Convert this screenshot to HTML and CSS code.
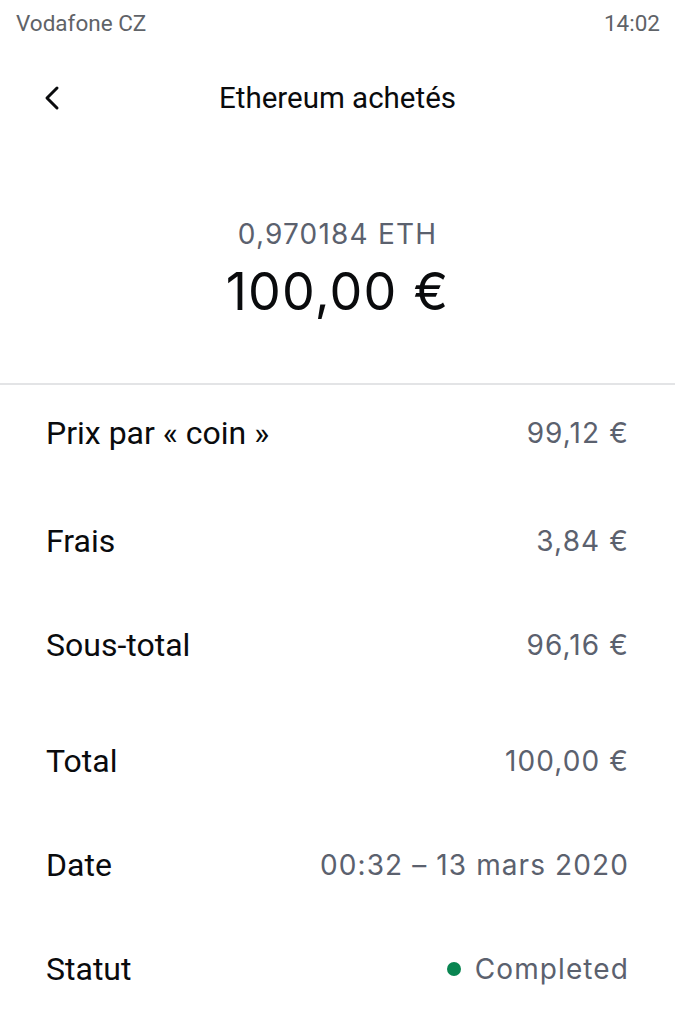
FILE: index.html
```html
<!DOCTYPE html>
<html lang="fr">
<head>
    <meta charset="UTF-8">
    <meta name="viewport" content="width=device-width, initial-scale=1.0">
    <title>Ethereum achetés</title>
    <link rel="stylesheet" href="styles.css">
</head>
<body>
    <div class="status-bar">
        <span>Vodafone CZ</span>
        <span>14:02</span>
    </div>

    <div class="header">
        <a class="back" href="#" aria-label="Retour">
            <svg width="20" height="26" viewBox="0 0 20 26">
                <path d="M15 3 L5 13 L15 23" fill="none" stroke="#0a0b0d" stroke-width="3" stroke-linecap="round" stroke-linejoin="round"/>
            </svg>
        </a>
        <h1>Ethereum achetés</h1>
    </div>

    <div class="hero">
        <div class="crypto-amount">0,970184 ETH</div>
        <div class="fiat-amount">100,00 €</div>
    </div>

    <div class="details">
        <div class="row">
            <span class="label">Prix par « coin »</span>
            <span class="value">99,12 €</span>
        </div>
        <div class="row">
            <span class="label">Frais</span>
            <span class="value">3,84 €</span>
        </div>
        <div class="row">
            <span class="label">Sous-total</span>
            <span class="value">96,16 €</span>
        </div>
        <div class="row row-total">
            <span class="label">Total</span>
            <span class="value">100,00 €</span>
        </div>
        <div class="row">
            <span class="label">Date</span>
            <span class="value">00:32 – 13 mars 2020</span>
        </div>
        <div class="row">
            <span class="label">Statut</span>
            <span class="value"><span class="status-dot"></span>Completed</span>
        </div>
    </div>
</body>
</html>
```

FILE: styles.css
```css
/* Base */
body {
    margin: 0;
    width: 675px;
    background: #fff;
    color: #0a0b0d;
    font-family: Roboto, "Noto Sans", sans-serif;
}

/* Phone status bar */
.status-bar {
    height: 46px;
    padding: 0 15px 0 16px;
    display: flex;
    justify-content: space-between;
    align-items: center;
    font-size: 22.5px;
    color: #5f6368;
}

/* Title bar */
.header {
    height: 104px;
    display: flex;
    align-items: center;
    justify-content: center;
    position: relative;
}

.back {
    position: absolute;
    left: 42px;
    top: 39px;
    display: flex;
}

.header h1 {
    margin: 0;
    font-size: 29.5px;
    font-weight: 400;
}

/* Amount block */
.hero {
    padding: 67px 0 61px;
    text-align: center;
    border-bottom: 2px solid #e3e4e6;
    font-family: Inter, "Noto Sans", sans-serif;
}

.crypto-amount {
    font-size: 28px;
    line-height: 34px;
    letter-spacing: 1.2px;
    color: #5b616e;
}

.fiat-amount {
    margin-top: 11px;
    font-size: 52px;
    line-height: 60px;
    letter-spacing: 1.2px;
}

/* Detail rows */
.details {
    padding: 0 46px;
}

.row {
    height: 104px;
    display: flex;
    justify-content: space-between;
    align-items: center;
    box-sizing: border-box;
}

.row:first-child {
    padding-bottom: 8px;
}

.row-total {
    margin-top: 12px;
}

.label {
    font-size: 32px;
}

.value {
    display: flex;
    align-items: center;
    font-family: Inter, "Noto Sans", sans-serif;
    font-size: 28px;
    letter-spacing: 1.1px;
    color: #5b616e;
}

.status-dot {
    width: 14px;
    height: 14px;
    border-radius: 50%;
    background: #098551;
    margin-right: 14px;
}
```
